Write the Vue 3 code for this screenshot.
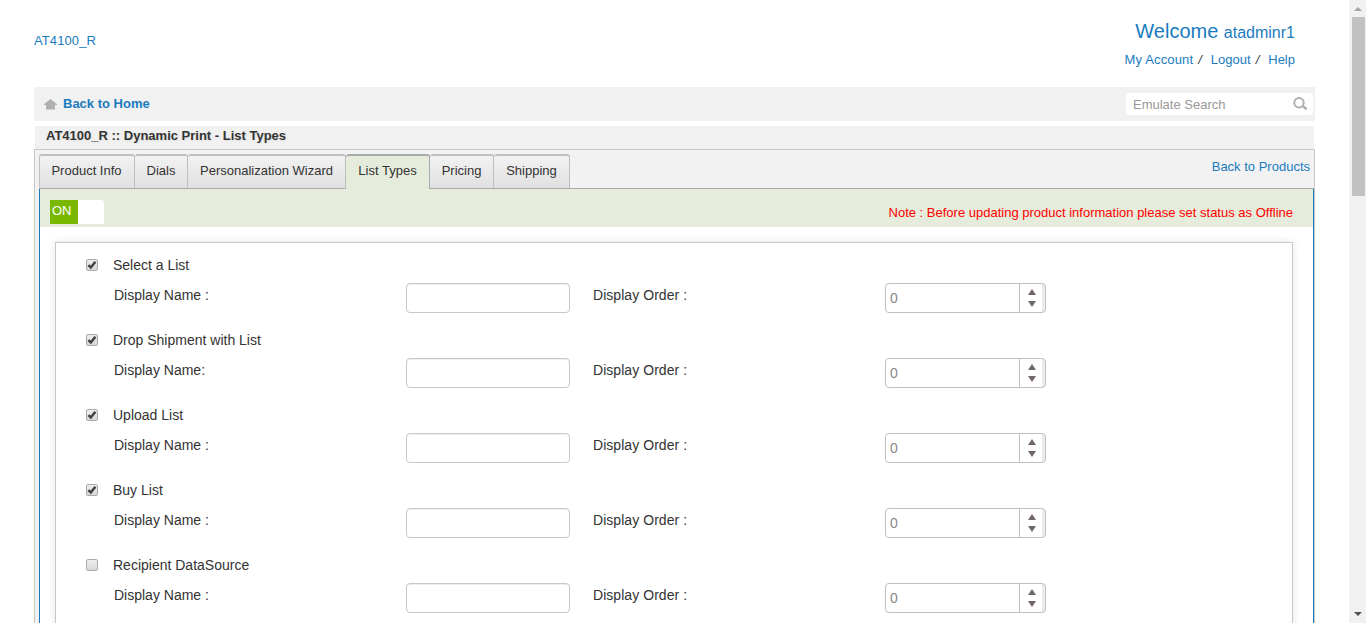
<script setup>
const tabs = ['Product Info', 'Dials', 'Personalization Wizard', 'List Types', 'Pricing', 'Shipping']
const widths = [96, 53, 158, 84, 64, 76]
const rows = [
  { title: 'Select a List', label: 'Display Name :', on: true },
  { title: 'Drop Shipment with List', label: 'Display Name:', on: true },
  { title: 'Upload List', label: 'Display Name :', on: true },
  { title: 'Buy List', label: 'Display Name :', on: true },
  { title: 'Recipient DataSource', label: 'Display Name :', on: false }
]
</script>

<template>
  <div class="screen">
    <div class="page">
      <header class="head">
        <a class="brand">AT4100_R</a>
        <div class="user">
          <div class="welcome">Welcome <span>atadminr1</span></div>
          <div class="links"><a class="account">My Account</a><i>/</i><a>Logout</a><i>/</i><a>Help</a></div>
        </div>
      </header>
      <nav class="bar">
        <svg class="home" width="13" height="11" viewBox="0 0 13 11"><path d="M6.5 0 13 5.2V6H11V10.5H2V6H0V5.2Z" fill="#b0b0b0" /></svg>
        <a class="back">Back to Home</a>
        <div class="search">
          <span>Emulate Search</span>
          <svg width="15" height="14" viewBox="0 0 15 14" fill="none" stroke="#b0b0b0"><circle cx="6" cy="5.8" r="4.7" stroke-width="2" /><path d="M9.4 8.8 13.6 12.2" stroke-width="2.6" /></svg>
        </div>
      </nav>
      <h1 class="title">AT4100_R :: Dynamic Print - List Types</h1>
      <main class="panel">
        <div class="tabrow">
          <div class="tabs">
            <div v-for="(t, i) in tabs" :key="t" class="tab" :class="{ active: i === 3 }" :style="{ width: widths[i] + 'px' }">{{ t }}</div>
          </div>
          <a class="products">Back to Products</a>
        </div>
        <div class="content">
          <div class="status">
            <div class="toggle"><span>ON</span></div>
            <div class="note">Note : Before updating product information please set status as Offline</div>
          </div>
          <section class="card">
            <div v-for="r in rows" :key="r.title" class="group">
              <div class="grouphead">
                <div class="check">
                  <svg v-if="r.on" width="10" height="10" viewBox="0 0 10 10"><path d="M1.4 5.2 3.8 7.5 8.4 1.7" fill="none" stroke="#404040" stroke-width="2.5" /></svg>
                </div>
                <span>{{ r.title }}</span>
              </div>
              <div class="fields">
                <label class="name">{{ r.label }}</label>
                <div class="input"></div>
                <label class="order">Display Order :</label>
                <div class="spinner">
                  <span>0</span>
                  <div class="arrows"><b class="up"></b><b class="down"></b></div>
                </div>
              </div>
            </div>
          </section>
        </div>
      </main>
    </div>
    <div class="scroll">
      <b class="sup"></b>
      <div class="thumb"></div>
      <b class="sdown"></b>
    </div>
  </div>
</template>

<style>
html, body { margin: 0; overflow: hidden; }
</style>
<style scoped>
.screen { display: flex; justify-content: space-between; width: 1366px; height: 623px; overflow: hidden; background: #fff; font-family: "Liberation Sans", Arial, sans-serif; font-size: 13px; line-height: 16px; color: #333; white-space: nowrap; }
.screen * { box-sizing: border-box; }
.page { width: 1281px; margin-left: 34px; display: flex; flex-direction: column; }
a { color: #1a7bbf; }
.head { height: 87px; display: flex; flex: none; justify-content: space-between; }
.brand { margin-top: 33px; letter-spacing: 0.1px; }
.user { margin: 19px 20px 0 0; text-align: right; color: #1a7bbf; }
.welcome { font-size: 20px; line-height: 24px; }
.welcome span { font-size: 16px; }
.links { margin-top: 7px; }
.links i { color: #333; margin: 0 9px 0 5px; }
.account { letter-spacing: 0.15px; }
.bar { height: 34px; flex: none; background: #f1f1f1; display: flex; align-items: center; padding: 0 2px 0 10px; }
.back { font-weight: bold; margin-left: 6px; margin-top: -1px; }
.search { margin-left: auto; width: 187px; height: 22px; border-radius: 3px; background: #fff; display: flex; align-items: center; justify-content: space-between; padding: 0 5px 0 7px; color: #999; }
.search span { padding-top: 1px; }
.title { font-size: 13px; line-height: 16px; height: 23px; flex: none; margin: 5px 1px 0; padding: 2px 0 0 11px; background: #f1f1f1; color: #333; text-shadow: 1px 1px 2px #ddd; }
.panel { flex: 1; border: 1px solid #c8c8c8; border-bottom: 0; background: #f2f2f2; display: flex; flex-direction: column; }
.tabrow { height: 39px; flex: none; display: flex; justify-content: space-between; border-bottom: 1px solid #aaa; margin-left: 4px; padding-top: 4px; }
.tabs { display: flex; height: 34px; }
.tab { height: 34px; border-top: 2px solid #bfbfbf; border-right: 1px solid #bfbfbf; border-radius: 3px 3px 0 0; background: linear-gradient(#f2f2f2, #e0e0e0); text-align: center; line-height: 30px; }
.tab:first-child { border-left: 1px solid #bfbfbf; padding-right: 1px; }
.tab.active { background: #e5ecdc; height: 35px; border-color: #aaa; }
.products { margin: 5px 4px 0 0; }
.content { flex: 1; background: #fff; border: solid #1a7bbf; border-width: 0 1px; margin-left: 4px; }
.status { height: 38px; background: #e5ecdc; display: flex; justify-content: space-between; padding: 11px 20px 0 10px; }
.toggle { width: 54px; height: 24px; background: #fff; border-radius: 0 3px 0 0; }
.toggle span { display: block; width: 28px; height: 24px; background: #7ab800; color: #fff; padding: 2px 0 0 2px; line-height: 18px; }
.note { color: #f00; margin-top: 5px; }
.card { margin: 15px 20px 0 15px; height: 500px; border: 1px solid #c8c8c8; box-shadow: 0 0 8px #e4e4e4; background: #fff; padding-top: 14px; font-size: 14px; }
.group { height: 75px; }
.grouphead { display: flex; height: 16px; padding-left: 30px; }
.check { width: 12px; height: 12px; border: 1px solid #aaa; border-radius: 2px; background: linear-gradient(#eee, #d8d8d8); margin: 2px 15px 0 0; display: flex; }
.check svg { flex: none; }
.fields { display: grid; grid-template-columns: 292px 186px 293px 161px; padding: 10px 0 0 58px; }
.name, .order { margin-top: 4px; }
.order { padding-left: 1px; letter-spacing: 0.05px; }
.input { width: 164px; height: 30px; border: 1px solid #c8c8c8; border-radius: 4px; box-shadow: inset 0 1px 1px #eee; }
.spinner { height: 30px; border: 1px solid #c0c0c0; border-radius: 4px; display: flex; justify-content: space-between; background: linear-gradient(90deg, #fff 156px, #ececec 156px); color: #888; padding-left: 4px; line-height: 29px; }
.arrows { width: 26px; border-left: 1px solid #c0c0c0; display: flex; flex-direction: column; padding: 5px 0 0 8px; gap: 6px; }
.arrows b { width: 8px; height: 6px; border: solid transparent; border-width: 0 4px; }
.arrows .up { border-bottom: 6px solid #706762; }
.arrows .down { border-top: 6px solid #706762; }
.scroll { width: 17px; background: #f1f1f1; display: flex; flex-direction: column; align-items: center; }
.thumb { width: 13px; height: 179px; background: #c1c1c1; margin-top: 6px; margin-left: 1px; }
.sup { border: 4px solid transparent; border-top: 0; border-bottom-color: #a3a3a3; margin-top: 7px; }
.sdown { border: 4px solid transparent; border-bottom: 0; border-top-color: #505050; margin: auto 0 7px; }
</style>
